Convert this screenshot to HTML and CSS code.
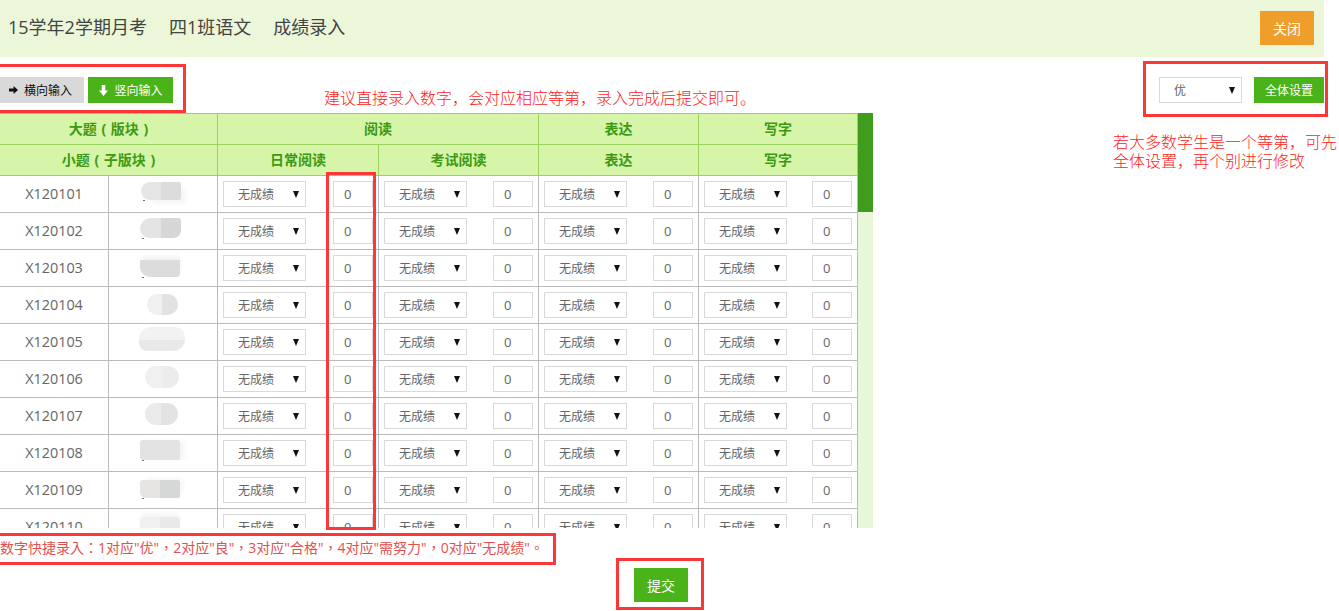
FILE: index.html
```html
<!DOCTYPE html>
<html lang="zh-CN">
<head>
<meta charset="utf-8">
<title>成绩录入</title>
<link rel="stylesheet" href="styles.css">
</head>
<body>
<div class="page">
  <header class="topbar">
    <div class="crumbs"><span>15学年2学期月考</span><span>四1班语文</span><span>成绩录入</span></div>
    <button class="btn btn-orange close">关闭</button>
  </header>
  <div class="toolbar">
    <div class="dirs">
      <button class="btn btn-gray"><svg class="ico ico-r" viewBox="0 0 9 8"><path d="M0 2.4h4.6V0L9 4 4.6 8V5.6H0z"/></svg>横向输入</button>
      <button class="btn btn-green"><svg class="ico ico-d" viewBox="0 0 9 11"><path d="M2.7 0h3.6v5.6H9L4.5 11 0 5.6h2.7z"/></svg>竖向输入</button>
    </div>
    <div class="bulk">
      <span class="pick"><select><option>优</option></select></span>
      <button class="btn btn-green wide">全体设置</button>
    </div>
  </div>
  <div class="scroller">
    <table class="grid">
      <colgroup><col class="c1"><col class="c1"><col class="c2"><col class="c3"><col class="c3"><col class="c4"></colgroup>
      <thead>
        <tr class="h1"><th colspan="2">大题 ( 版块 )</th><th colspan="2">阅读</th><th>表达</th><th>写字</th></tr>
        <tr class="h2"><th colspan="2">小题 ( 子版块 )</th><th>日常阅读</th><th>考试阅读</th><th>表达</th><th>写字</th></tr>
      </thead>
      <tbody>
        <tr><td class="id">X120101</td><td><div class="blob b1"></div></td><td><div class="entry"><span class="pick"><select><option>无成绩</option></select></span><input value="0"></div></td><td><div class="entry"><span class="pick"><select><option>无成绩</option></select></span><input value="0"></div></td><td><div class="entry"><span class="pick"><select><option>无成绩</option></select></span><input value="0"></div></td><td><div class="entry"><span class="pick"><select><option>无成绩</option></select></span><input value="0"></div></td></tr>
        <tr><td class="id">X120102</td><td><div class="blob b2"></div></td><td><div class="entry"><span class="pick"><select><option>无成绩</option></select></span><input value="0"></div></td><td><div class="entry"><span class="pick"><select><option>无成绩</option></select></span><input value="0"></div></td><td><div class="entry"><span class="pick"><select><option>无成绩</option></select></span><input value="0"></div></td><td><div class="entry"><span class="pick"><select><option>无成绩</option></select></span><input value="0"></div></td></tr>
        <tr><td class="id">X120103</td><td><div class="blob b3"></div></td><td><div class="entry"><span class="pick"><select><option>无成绩</option></select></span><input value="0"></div></td><td><div class="entry"><span class="pick"><select><option>无成绩</option></select></span><input value="0"></div></td><td><div class="entry"><span class="pick"><select><option>无成绩</option></select></span><input value="0"></div></td><td><div class="entry"><span class="pick"><select><option>无成绩</option></select></span><input value="0"></div></td></tr>
        <tr><td class="id">X120104</td><td><div class="blob b4"></div></td><td><div class="entry"><span class="pick"><select><option>无成绩</option></select></span><input value="0"></div></td><td><div class="entry"><span class="pick"><select><option>无成绩</option></select></span><input value="0"></div></td><td><div class="entry"><span class="pick"><select><option>无成绩</option></select></span><input value="0"></div></td><td><div class="entry"><span class="pick"><select><option>无成绩</option></select></span><input value="0"></div></td></tr>
        <tr><td class="id">X120105</td><td><div class="blob b5"></div></td><td><div class="entry"><span class="pick"><select><option>无成绩</option></select></span><input value="0"></div></td><td><div class="entry"><span class="pick"><select><option>无成绩</option></select></span><input value="0"></div></td><td><div class="entry"><span class="pick"><select><option>无成绩</option></select></span><input value="0"></div></td><td><div class="entry"><span class="pick"><select><option>无成绩</option></select></span><input value="0"></div></td></tr>
        <tr><td class="id">X120106</td><td><div class="blob b6"></div></td><td><div class="entry"><span class="pick"><select><option>无成绩</option></select></span><input value="0"></div></td><td><div class="entry"><span class="pick"><select><option>无成绩</option></select></span><input value="0"></div></td><td><div class="entry"><span class="pick"><select><option>无成绩</option></select></span><input value="0"></div></td><td><div class="entry"><span class="pick"><select><option>无成绩</option></select></span><input value="0"></div></td></tr>
        <tr><td class="id">X120107</td><td><div class="blob b7"></div></td><td><div class="entry"><span class="pick"><select><option>无成绩</option></select></span><input value="0"></div></td><td><div class="entry"><span class="pick"><select><option>无成绩</option></select></span><input value="0"></div></td><td><div class="entry"><span class="pick"><select><option>无成绩</option></select></span><input value="0"></div></td><td><div class="entry"><span class="pick"><select><option>无成绩</option></select></span><input value="0"></div></td></tr>
        <tr><td class="id">X120108</td><td><div class="blob b8"></div></td><td><div class="entry"><span class="pick"><select><option>无成绩</option></select></span><input value="0"></div></td><td><div class="entry"><span class="pick"><select><option>无成绩</option></select></span><input value="0"></div></td><td><div class="entry"><span class="pick"><select><option>无成绩</option></select></span><input value="0"></div></td><td><div class="entry"><span class="pick"><select><option>无成绩</option></select></span><input value="0"></div></td></tr>
        <tr><td class="id">X120109</td><td><div class="blob b9"></div></td><td><div class="entry"><span class="pick"><select><option>无成绩</option></select></span><input value="0"></div></td><td><div class="entry"><span class="pick"><select><option>无成绩</option></select></span><input value="0"></div></td><td><div class="entry"><span class="pick"><select><option>无成绩</option></select></span><input value="0"></div></td><td><div class="entry"><span class="pick"><select><option>无成绩</option></select></span><input value="0"></div></td></tr>
        <tr><td class="id">X120110</td><td><div class="blob b10"></div></td><td><div class="entry"><span class="pick"><select><option>无成绩</option></select></span><input value="0"></div></td><td><div class="entry"><span class="pick"><select><option>无成绩</option></select></span><input value="0"></div></td><td><div class="entry"><span class="pick"><select><option>无成绩</option></select></span><input value="0"></div></td><td><div class="entry"><span class="pick"><select><option>无成绩</option></select></span><input value="0"></div></td></tr>
      </tbody>
    </table>
    <div class="track"><div class="thumb"></div></div>
  </div>
  <p class="tip" lang="zh-Hant">数字快捷录入：1对应"优"，2对应"良"，3对应"合格"，4对应"需努力"，0对应"无成绩"。</p>
  <div class="actions"><button class="btn btn-green submit">提交</button></div>

  <p class="note note-top">建议直接录入数字，会对应相应等第，录入完成后提交即可。</p>
  <p class="note note-side">若大多数学生是一个等第，可先<br>全体设置，再个别进行修改</p>
  <div class="mark m-dirs"></div>
  <div class="mark m-bulk"></div>
  <div class="mark m-col"></div>
  <div class="mark m-tip"></div>
  <div class="mark m-submit"></div>
</div>
</body>
</html>
```
FILE: styles.css
```css
* { box-sizing: border-box; }
html, body { margin: 0; padding: 0; background: #fff; }
body { font-family: "Open Sans", "Noto Sans CJK SC", sans-serif; color: #666; overflow: hidden; height: 611px; }
.page { position: relative; width: 1339px; height: 611px; }

.topbar { width: 1324px; height: 57px; background: #ebf7d8; display: flex; align-items: center; justify-content: space-between; padding: 0 10px 2px 8px; }
.crumbs { display: flex; gap: 22px; font-size: 18px; color: #444; padding-bottom: 4px; }

.btn { border: 0; padding: 0; margin: 0; font: inherit; font-size: 12px; display: inline-flex; align-items: center; justify-content: center; }
.btn-orange { background: #ef9e2a; color: #fff; }
.btn-green { background: #4ab31a; color: #fff; }
.btn-gray { background: #d9d9d9; color: #111; }
.close { width: 54px; height: 34px; font-size: 14px; }

.toolbar { width: 1324px; height: 56px; padding-top: 20px; display: flex; justify-content: space-between; align-items: flex-start; }
.dirs { display: flex; gap: 4px; }
.dirs .btn { height: 26px; }
.btn-gray { width: 84px; padding-right: 3px; }
.dirs .btn-green { width: 85px; padding-left: 1px; }
.ico { margin-right: 6px; fill: currentColor; flex: none; }
.ico-r { width: 9px; height: 8px; }
.ico-d { width: 9px; height: 11px; }
.bulk { display: flex; gap: 12px; }
.wide { width: 70px; height: 26px; }

.scroller { width: 873px; height: 415px; overflow: hidden; display: flex; align-items: stretch; }
.grid { width: 858px; flex: none; table-layout: fixed; border-collapse: separate; border-spacing: 0; align-self: flex-start; }
.c1 { width: 109px; }
.c2 { width: 161px; }
.c3 { width: 160px; }
.c4 { width: 159px; }
.grid th { background: #d6f5a9; color: #3d9a12; font-size: 14px; font-weight: 700; padding: 0; border-right: 1px solid #9bd25f; border-bottom: 1px solid #9bd25f; line-height: 18px; word-spacing: 1px; }
.h1 th { height: 32px; border-top: 1px solid #9bd25f; }
.h2 th { height: 31px; }
.grid td { height: 37px; padding: 0; border-right: 1px solid #bbb; border-bottom: 1px solid #bbb; vertical-align: middle; }
.grid td:nth-child(2) { vertical-align: top; }
.grid td.id { font-size: 14.4px; line-height: 18px; text-align: center; color: #666; }
.entry { display: flex; justify-content: space-between; align-items: center; padding: 0 5px; }

.pick { position: relative; display: inline-block; width: 83px; height: 26px; flex: none; }
.pick::after { content: ""; position: absolute; left: 70px; top: 10px; border-left: 3.5px solid transparent; border-right: 3.5px solid transparent; border-top: 7px solid #111; pointer-events: none; }
.pick select { appearance: none; width: 100%; height: 100%; border: 1px solid #d9d9d9; border-radius: 0; background: #fff; font: inherit; font-size: 12px; color: #666; padding: 0 0 0 14px; outline: 0; }
.entry input { width: 40px; height: 26px; flex: none; border: 1px solid #d9d9d9; border-radius: 0; padding: 0 0 0 10px; font: inherit; font-size: 13px; color: #666; background: #fff; outline: 0; }

.track { width: 15px; flex: none; background: #e9f7d9; }
.thumb { height: 99px; background: #3f9c1f; }

.tip { margin: 0; height: 40px; padding: 10px 0 0; line-height: 20px; font-family: "Open Sans", "Noto Sans CJK TC", sans-serif; font-size: 14px; color: #e2504f; white-space: nowrap; }
.actions { width: 1322px; display: flex; justify-content: center; }
.submit { width: 54px; height: 34px; font-size: 14px; }

.note { position: absolute; margin: 0; color: #f22; font-size: 16px; font-weight: 300; line-height: 19px; white-space: nowrap; }
.note-top { left: 324px; top: 89px; }
.note-side { left: 1113px; top: 133px; }

.mark { position: absolute; border: 3px solid #fb3737; pointer-events: none; }
.m-dirs { left: -3px; top: 64px; width: 189px; height: 49px; }
.m-bulk { left: 1143px; top: 61px; width: 185px; height: 56px; }
.m-col { left: 326px; top: 172px; width: 50px; height: 358px; }
.m-tip { left: -3px; top: 533px; width: 559px; height: 32px; }
.m-submit { left: 616px; top: 558px; width: 88px; height: 52px; }

.blob { position: relative; width: 40px; margin-left: 32px; }
.b1 { height: 18px; margin-top: 6px; border-radius: 10px 2px 2px 10px; background: linear-gradient(90deg, #e6e6e6 50%, #dcdcdc 50%); box-shadow: 6px 5px 4px -1px #f6f6f6; }
.b2 { height: 20px; margin-top: 5px; margin-left: 31px; width: 41px; border-radius: 11px 3px 8px 10px; background: linear-gradient(90deg, #e4e4e4 50%, #d6d6d6 50%); }
.b3 { height: 17px; margin-top: 10px; margin-left: 31px; background: #dcdcdc; border-radius: 0 0 4px 10px; box-shadow: 2px -5px 4px -1px #f3f3f3; }
.b4 { height: 21px; margin-top: 7px; margin-left: 38px; width: 31px; border-radius: 11px; background: linear-gradient(90deg, #f0f0f0 50%, #e2e2e2 50%); }
.b5 { height: 24px; margin-top: 3px; margin-left: 30px; width: 46px; border-radius: 12px 10px 12px 8px; background: linear-gradient(180deg, #f2f2f2 55%, #e9e9e9 55%); }
.b6 { height: 22px; margin-top: 5px; margin-left: 36px; width: 34px; border-radius: 11px; background: linear-gradient(90deg, #f0f0f0 50%, #ececec 50%); }
.b7 { height: 22px; margin-top: 5px; margin-left: 36px; width: 33px; border-radius: 11px; background: linear-gradient(90deg, #ebebeb 50%, #e3e3e3 50%); }
.b8 { height: 20px; margin-top: 5px; margin-left: 31px; border-radius: 3px 2px 2px 3px; background: #e3e3e3; box-shadow: 6px 0 4px -1px #f6f6f6; }
.b9 { height: 18px; margin-top: 8px; margin-left: 31px; border-radius: 3px 2px 2px 6px; background: linear-gradient(90deg, #e6e5e3 50%, #d6d8d7 50%); box-shadow: 4px -3px 4px -1px #f5f5f5; }
.b10 { height: 22px; margin-top: 8px; margin-left: 31px; border-radius: 4px; background: linear-gradient(90deg, #f0f0f0 50%, #e9e9e9 50%); box-shadow: 0 -5px 4px -1px #f6f6f6; }
.b1::after, .b2::after, .b3::after, .b8::after, .b9::after { content: ""; position: absolute; left: 2px; bottom: -1px; width: 2px; height: 1px; background: #777; }
```
